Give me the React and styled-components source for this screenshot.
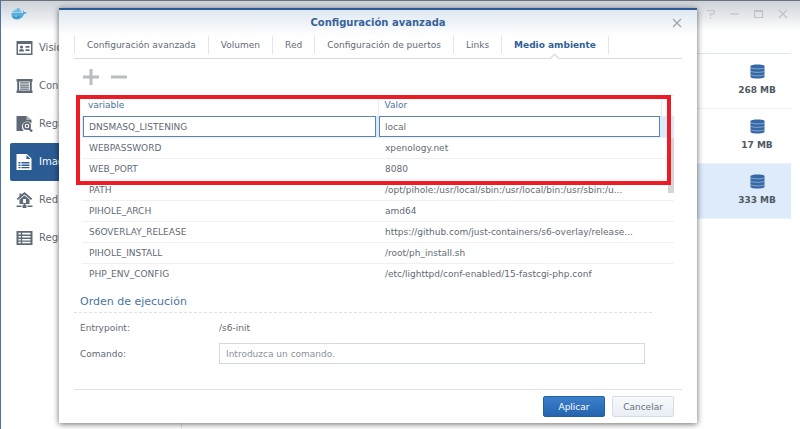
import React, { useState } from 'react'
import styled, { createGlobalStyle, css } from 'styled-components'

const GlobalStyle = createGlobalStyle`
	*, *::before, *::after {
		box-sizing: border-box;
	}
	body {
		margin: 0;
		overflow: hidden;
		background: #fff;
		color: #5f6a76;
		font: 9px/12px "DejaVu Sans", Verdana, sans-serif;
	}
	button, input {
		font: inherit;
		color: inherit;
	}
`

const Window = styled.div`
	position: relative;
	display: flex;
	flex-direction: column;
	min-height: 100vh;
	border-left: 1px solid #4a74a9;
	border-top: 1px solid #6c717b;
	background: linear-gradient(#cdd2d9, #fff 30px);
`
const WindowBar = styled.header`
	display: flex;
	align-items: center;
	justify-content: space-between;
	height: 28px;
	padding: 0 12px 2px 10px;
`
const WindowControls = styled.div`
	display: flex;
	gap: 14px;
`
const IconButton = styled.button`
	display: flex;
	padding: 0;
	border: none;
	background: none;
	color: ${p => p.$color || '#bfc3c8'};
	cursor: pointer;
`
const WindowBody = styled.div`
	display: flex;
	flex: 1;
`
const Sidebar = styled.nav`
	display: flex;
	flex-direction: column;
	width: 181px;
	padding-left: 9px;
	border-right: 1px solid #e3e6ea;
`
const SidebarItem = styled.a`
	display: flex;
	align-items: center;
	gap: 6px;
	height: 38px;
	padding-left: 6px;
	border-radius: 2px;
	color: #5f6a76;
	font-size: 10px;
	text-decoration: none;
	${p => p.$active && css`
		background: #2a5b93;
		color: #fff;
	`}
`
const ImageList = styled.ul`
	flex: 1;
	margin: 24px 9px 0 0;
	padding: 0;
	list-style: none;
	border-top: 1px solid #dde7f1;
`
const ImageItem = styled.li`
	display: flex;
	justify-content: flex-end;
	height: 55px;
	border-bottom: 1px solid #edf1f6;
	background: ${p => (p.$selected ? '#deebfa' : 'transparent')};
`
const ImageSize = styled.div`
	display: flex;
	flex-direction: column;
	align-items: center;
	gap: 5px;
	width: 68px;
	padding-top: 10px;
	color: #4f5a66;
	font-weight: bold;
`

const Dialog = styled.section`
	position: absolute;
	top: 7px;
	left: 58px;
	right: 103px;
	padding: 0 15px;
	border-top: 2px solid #2a5b93;
	background: linear-gradient(#dfe8f1, #fff 26px);
	box-shadow: 0 1px 6px rgba(0, 0, 0, 0.6);
`
const DialogHeader = styled.header`
	display: grid;
	grid-template-columns: 1fr auto 1fr;
	align-items: center;
	height: 26px;
`
const DialogTitle = styled.h1`
	grid-column: 2;
	margin: 0;
	color: #37639a;
	font-size: 10px;
	line-height: 12px;
`
const DialogClose = styled(IconButton)`
	justify-self: end;
`
const Tabs = styled.div`
	display: flex;
	height: 23px;
	padding-bottom: 4px;
	border-bottom: 1px solid #d9dbde;
`
const Tab = styled.button`
	position: relative;
	height: 18px;
	padding: 0 12px;
	border: none;
	border-right: 1px solid #dfe7f0;
	background: none;
	cursor: pointer;
	&:first-child {
		border-left: 1px solid #dfe7f0;
	}
	${p => p.$active && css`
		color: #2f5f98;
		font-weight: bold;
		&::after {
			content: '';
			position: absolute;
			left: 50%;
			top: 19px;
			width: 7px;
			height: 7px;
			margin-left: -4px;
			border: solid #d0d3d7;
			border-width: 1px 0 0 1px;
			background: linear-gradient(135deg, #fff 50%, transparent 50%);
			transform: rotate(45deg);
		}
	`}
`
const Toolbar = styled.div`
	display: flex;
	align-items: center;
	gap: 12px;
	height: 36px;
	padding-left: 9px;
`
const GridWrap = styled.div`
	position: relative;
	height: 189px;
	margin: 0 8px;
	border-top: 1px solid #e6e9ed;
`
const GridClip = styled.div`
	height: 100%;
	overflow: hidden;
`
const Grid = styled.table`
	width: 100%;
	border-collapse: collapse;
	table-layout: fixed;
`
const HeadCell = styled.th`
	width: ${p => p.$width || 'auto'};
	height: 20px;
	padding: 0 6px 2px;
	border-right: 1px solid #e6edf5;
	color: #4a729f;
	font-weight: normal;
	text-align: left;
	&:last-child {
		border-right: none;
	}
`
const GridRow = styled.tr`
	height: 21px;
	border-bottom: 1px solid #edf1f5;
	${p => p.$editing && css`
		background: #dbe9f9;
	`}
`
const Cell = styled.td`
	padding: ${p => (p.$editing ? '0 2px 0 1px' : '0 20px 0 7px')};
	overflow: hidden;
	white-space: nowrap;
	text-overflow: ellipsis;
`
const CellInput = styled.input`
	display: block;
	width: 100%;
	height: 21px;
	padding: 0 5px;
	border: 1px solid #5b84b3;
	background: #fff;
	outline: none;
`
const ScrollThumb = styled.div`
	position: absolute;
	top: 42px;
	right: 0;
	width: 6px;
	height: 55px;
	background: #d5d5d5;
`
const Highlight = styled.div`
	position: absolute;
	top: -1px;
	left: -6px;
	right: 3px;
	height: 90px;
	border: 4px solid #ed1c24;
	pointer-events: none;
`
const Section = styled.form`
	padding-right: 30px;
`
const SectionTitle = styled.h2`
	margin: 0;
	padding: 11px 6px 3px;
	border-bottom: 1px dashed #d8e2f0;
	color: #4a729f;
	font-size: 11px;
	font-weight: normal;
	line-height: 14px;
`
const Field = styled.div`
	display: grid;
	grid-template-columns: 139px 1fr;
	align-items: center;
	height: ${p => p.$height};
	padding: 0 7px 0 6px;
`
const CommandInput = styled.input`
	width: 100%;
	height: 21px;
	padding: 0 6px;
	border: 1px solid #d0d9e4;
	background: #fff;
	&::placeholder {
		color: #8a929c;
		opacity: 1;
	}
`
const DialogFooter = styled.footer`
	display: flex;
	justify-content: flex-end;
	gap: 7px;
	margin-top: 25px;
	padding: 6px 8px;
	border-top: 1px solid #e0e3e6;
`
const Button = styled.button`
	min-width: 62px;
	height: 21px;
	padding: 0 10px;
	border: 1px solid ${p => (p.$primary ? '#2360a8' : '#d3dde8')};
	border-radius: 2px;
	background: ${p => (p.$primary ? 'linear-gradient(#3c80cc, #2563ad)' : 'linear-gradient(#f7fafc, #e9eef4)')};
	color: ${p => (p.$primary ? '#fff' : '#68727d')};
	cursor: pointer;
`

const Whale = () => (
	<svg width="16" height="12" viewBox="0 0 16 12" aria-hidden="true">
		<path d="M.5 5h11c.8-.5.8-1.700.2-2.700 1 .3 1.600 1 1.700 1.900.7-.2 1.500-.1 2.300.3-.5 1.100-1.500 1.500-2.600 1.500-1.100 3.200-3.500 5.500-7 5.500C2.500 11.500 0 9.500.5 5z" fill="#58aedb" />
		<path d="M1.500 4.500V3H3.500V1.500H6V0h2.500v1.500H9.500V3h1v1.500z" fill="#6fbde4" />
		<path d="M1 8c3 .8 6 .4 9-.8-.8 2.300-2.300 3.800-4.500 3.800S1.600 9.900 1 8z" fill="#3f97c6" />
		<circle cx="5" cy="8" r=".6" fill="#fff" />
	</svg>
)

const icons = {
	overview: (
		<>
			<path fillRule="evenodd" d="M0 1h16v14H0zM1.500 4v9.500h13V4z" />
			<circle cx="5" cy="7" r="1.600" />
			<path d="M2.500 11.500c0-3.200 5-3.200 5 0zM9 6h4v1.700H9zM9 9.300h4V11H9z" />
		</>
	),
	container: (
		<path d="M0 1h16v2.500H0zM0 12.500h16V15H0zM.7 3h2v10h-2zM13.300 3h2v10h-2zM3.600 4.300h8.800v1.300H3.600zM3.600 6.400h8.800v1.300H3.600zM3.600 8.500h8.800v1.300H3.600zM3.600 10.600h8.800v1.200H3.600z" />
	),
	registry: (
		<>
			<path d="M0 0h10l5 4v3.500a5 5 0 0 0-8.500 6.500l.7 1H0z" />
			<path d="M10 0v4h5z" fill="#aeb5bd" />
			<circle cx="10.500" cy="10" r="3.200" fill="none" stroke="currentColor" strokeWidth="1.700" />
			<path d="M12.600 12.500l3 3" stroke="currentColor" strokeWidth="2.200" />
			<circle cx="10.500" cy="10" r="1.200" />
		</>
	),
	image: (
		<path fillRule="evenodd" d="M0 0h10.500L15 4.500V16H0zM10 1v4h4zM2 8v1.500h2V8zM5 8v1.500h8V8zM2 10.500V12h2v-1.500zM5 10.500V12h8v-1.500zM2 13v1.300h2V13zM5 13v1.300h8V13z" />
	),
	network: (
		<>
			<path d="M8 0l7.800 6.800-1.200 1.200L8 2.500 1.400 8 .2 6.800 3 4.300V1.500h2v1z" />
			<path fillRule="evenodd" d="M8 3.400L13 7.600V12H3V7.600zM6.600 7v4h2.800V7z" />
			<path d="M7.200 12h1.600v1.500H7.200zM0 13.500h5V15H0zM6 13h4v3H6zM11 13.500h5V15h-5z" />
		</>
	),
	log: (
		<path fillRule="evenodd" d="M0 1h16v14H0zM2 2.800v1.700h2.300V2.800zM5.700 2.800v1.700H14V2.800zM2 5.900v1.600h2.300V5.900zM5.700 5.900v1.600H14V5.900zM2 8.900v1.600h2.300V8.900zM5.700 8.900v1.600H14V8.900zM2 11.800v1.500h2.300v-1.500zM5.700 11.800v1.500H14v-1.500z" />
	),
}

const SidebarIcon = ({ name }) => (
	<svg width="17" height="16" viewBox="0 0 16 16" fill="currentColor" aria-hidden="true">{icons[name]}</svg>
)

const Database = () => (
	<svg width="15" height="15" viewBox="0 0 15 15" aria-hidden="true">
		<path d="M.5 2.200C.5-.1 14.500-.1 14.500 2.200v10.500c0 2.500-14 2.500-14 0z" fill="#3568a5" />
		<path d="M.5 3.700c2 1.500 12 1.500 14 0M.5 7.200c2 1.500 12 1.500 14 0M.5 10.700c2 1.500 12 1.500 14 0" fill="none" stroke="#a9c1dd" strokeWidth=".7" />
	</svg>
)

const Stroke = ({ d, size = 10, width = 1.2 }) => (
	<svg width={size} height={size} viewBox={`0 0 ${size} ${size}`} fill="none" stroke="currentColor" strokeWidth={width} aria-hidden="true">
		<path d={d} />
	</svg>
)

const menu = [
	['overview', 'Visión'],
	['container', 'Contenedor'],
	['registry', 'Registro'],
	['image', 'Imagen'],
	['network', 'Red'],
	['log', 'Registro'],
]

const controls = [
	['Ayuda', 'M1 1.500h7V5H4.500v2M4.500 8v1.500'],
	['Minimizar', 'M0 5h9'],
	['Maximizar', 'M.5 1.500h8v7h-8zM.5 2.500h8'],
	['Cerrar', 'M1 1l8 8M9 1l-8 8'],
]

const tabs = ['Configuración avanzada', 'Volumen', 'Red', 'Configuración de puertos', 'Links', 'Medio ambiente']

const variables = [
	['WEBPASSWORD', 'xpenology.net'],
	['WEB_PORT', '8080'],
	['PATH', '/opt/pihole:/usr/local/sbin:/usr/local/bin:/usr/sbin:/u...'],
	['PIHOLE_ARCH', 'amd64'],
	['S6OVERLAY_RELEASE', 'https://github.com/just-containers/s6-overlay/release...'],
	['PIHOLE_INSTALL', '/root/ph_install.sh'],
	['PHP_ENV_CONFIG', '/etc/lighttpd/conf-enabled/15-fastcgi-php.conf'],
]

const VariableGrid = () => (
	<GridWrap>
		<GridClip>
			<Grid>
				<thead>
					<tr>
						<HeadCell $width="50%">variable</HeadCell>
						<HeadCell>Valor</HeadCell>
						<HeadCell $width="12px" />
					</tr>
				</thead>
				<tbody>
					<GridRow $editing>
						<Cell $editing><CellInput aria-label="variable" defaultValue="DNSMASQ_LISTENING" /></Cell>
						<Cell $editing><CellInput aria-label="Valor" defaultValue="local" /></Cell>
						<Cell $editing />
					</GridRow>
					{variables.map(([name, value]) => (
						<GridRow key={name}>
							<Cell>{name}</Cell>
							<Cell>{value}</Cell>
							<Cell />
						</GridRow>
					))}
				</tbody>
			</Grid>
		</GridClip>
		<ScrollThumb />
		<Highlight />
	</GridWrap>
)

const SettingsDialog = () => {
	const [active, setActive] = useState('Medio ambiente')
	return (
		<Dialog role="dialog" aria-labelledby="dialog-title">
			<DialogHeader>
				<DialogTitle id="dialog-title">Configuración avanzada</DialogTitle>
				<DialogClose $color="#9ba1a8" aria-label="Cerrar"><Stroke d="M1 1l8 8M9 1l-8 8" /></DialogClose>
			</DialogHeader>
			<Tabs role="tablist">
				{tabs.map(tab => (
					<Tab key={tab} role="tab" aria-selected={tab === active} $active={tab === active} onClick={() => setActive(tab)}>{tab}</Tab>
				))}
			</Tabs>
			<Toolbar>
				<IconButton $color="#b9bcc0" aria-label="Añadir"><Stroke size={16} width={3} d="M8 0v16M0 8h16" /></IconButton>
				<IconButton $color="#b9bcc0" aria-label="Quitar"><Stroke size={16} width={3} d="M0 8h16" /></IconButton>
			</Toolbar>
			<VariableGrid />
			<Section id="run-command" onSubmit={e => e.preventDefault()}>
				<SectionTitle>Orden de ejecución</SectionTitle>
				<Field $height="30px"><span>Entrypoint:</span><span>/s6-init</span></Field>
				<Field $height="21px">
					<label htmlFor="command">Comando:</label>
					<CommandInput id="command" placeholder="Introduzca un comando." />
				</Field>
			</Section>
			<DialogFooter>
				<Button $primary form="run-command" type="submit">Aplicar</Button>
				<Button type="button">Cancelar</Button>
			</DialogFooter>
		</Dialog>
	)
}

export default () => (
	<>
		<GlobalStyle />
		<Window>
			<WindowBar>
				<Whale />
				<WindowControls>
					{controls.map(([label, d]) => (
						<IconButton key={label} aria-label={label}><Stroke d={d} /></IconButton>
					))}
				</WindowControls>
			</WindowBar>
			<WindowBody>
				<Sidebar>
					{menu.map(([icon, label]) => (
						<SidebarItem key={icon} href="#" $active={icon === 'image'}><SidebarIcon name={icon} />{label}</SidebarItem>
					))}
				</Sidebar>
				<ImageList>
					{['268 MB', '17 MB', '333 MB'].map(size => (
						<ImageItem key={size} $selected={size === '333 MB'}>
							<ImageSize><Database />{size}</ImageSize>
						</ImageItem>
					))}
				</ImageList>
			</WindowBody>
			<SettingsDialog />
		</Window>
	</>
)
